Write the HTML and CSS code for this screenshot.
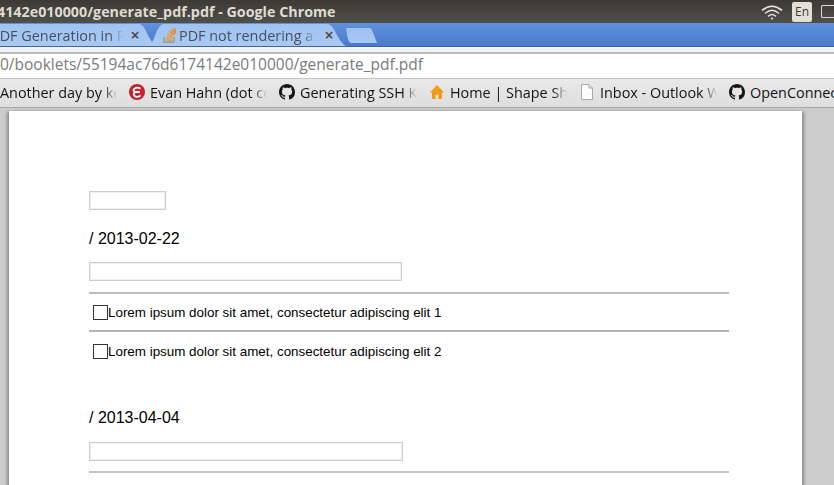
FILE: index.html
```html
<!DOCTYPE html>
<html lang="en">
<head>
<meta charset="utf-8">
<title>generate_pdf.pdf - Google Chrome</title>
<link rel="stylesheet" href="styles.css">
</head>
<body>
<div class="window">
  <header class="titlebar">
    <div class="title">4142e010000/generate_pdf.pdf - Google Chrome</div>
    <div class="tray">
      <svg class="wifi" width="22" height="16" viewBox="0 0 22 16" fill="none" stroke="#e6e3dc" stroke-width="1.6" stroke-linecap="round">
        <path d="M1.5 6 Q11 -1.5 20.5 6"/>
        <path d="M4.5 9 Q11 3.5 17.5 9"/>
        <path d="M7.5 12 Q11 9 14.5 12"/>
        <circle cx="11" cy="14.5" r="1.1" fill="#e6e3dc" stroke="none"/>
      </svg>
      <span class="lang">En</span>
      <span class="batt"></span>
    </div>
  </header>

  <nav class="tabstrip">
    <div class="tab tab-first">
      <span class="tab-label">PDF Generation in Rails</span>
      <span class="tab-close">×</span>
    </div>
    <div class="tab tab-second">
      <svg class="favicon" width="16" height="16" viewBox="0 0 16 16" fill="none">
        <path d="M2 10v5h10v-5" stroke="#a8936f" stroke-width="1.4"/>
        <path d="M4 13h6" stroke="#bca682" stroke-width="1.6"/>
        <path d="M4.2 10.8l6 .5M4.6 8.6l6 1.4M5.6 6.3l5.4 2.9" stroke="#e8a04a" stroke-width="1.5"/>
        <path d="M7.4 4l4.5 4M9.8 2l3.2 5M12.6 .8l1.1 5.7" stroke="#ee8a2a" stroke-width="1.5"/>
      </svg>
      <span class="tab-label">PDF not rendering as expected</span>
      <span class="tab-close">×</span>
    </div>
    <div class="newtab"></div>
  </nav>

  <div class="addressbar">
    <div class="url">0/booklets/55194ac76d6174142e010000/generate_pdf.pdf</div>
  </div>

  <div class="bookmarks">
    <div class="bm bm-first"><span class="bm-label">Another day by kevin</span></div>
    <div class="bm">
      <svg class="bm-icon" width="16" height="16" viewBox="0 0 16 16">
        <circle cx="8" cy="8" r="8" fill="#c4222c"/>
        <path d="M11.5 4.6Q8 2.6 5.6 4.6T6 8Q3.6 10 5.6 12T11.6 11.4M6.4 8H11" fill="none" stroke="#fff" stroke-width="1.8"/>
      </svg>
      <span class="bm-label">Evan Hahn (dot com)</span>
    </div>
    <div class="bm">
      <svg class="bm-icon" width="16" height="16" viewBox="0 0 16 16">
        <path fill="#161614" d="M8 0C3.58 0 0 3.58 0 8c0 3.54 2.29 6.53 5.47 7.59.4.07.55-.17.55-.38 0-.19-.01-.82-.01-1.49-2.01.37-2.53-.49-2.69-.94-.09-.23-.48-.94-.82-1.13-.28-.15-.68-.52-.01-.53.63-.01 1.08.58 1.23.82.72 1.21 1.87.87 2.33.66.07-.52.28-.87.51-1.07-1.78-.2-3.64-.89-3.64-3.95 0-.87.31-1.59.82-2.15-.08-.2-.36-1.02.08-2.12 0 0 .67-.21 2.2.82.64-.18 1.32-.27 2-.27s1.36.09 2 .27c1.53-1.04 2.2-.82 2.2-.82.44 1.1.16 1.92.08 2.12.51.56.82 1.27.82 2.15 0 3.07-1.87 3.75-3.65 3.95.29.25.54.73.54 1.48 0 1.07-.01 1.93-.01 2.2 0 .21.15.46.55.38A8.01 8.01 0 0 0 16 8c0-4.42-3.58-8-8-8z"/>
      </svg>
      <span class="bm-label">Generating SSH Keys</span>
    </div>
    <div class="bm">
      <svg class="bm-icon" width="16" height="16" viewBox="0 0 16 16">
        <path fill="#f59a14" d="M8 1L.8 8.4H3V15h3.6v-4.2h2.8V15H13V8.4h2.2z"/>
      </svg>
      <span class="bm-label">Home | Shape Shed</span>
    </div>
    <div class="bm">
      <svg class="bm-icon" width="16" height="16" viewBox="0 0 16 16">
        <path d="M2.5 .5H10L13.5 4v11.5h-11z" fill="#fbfbfa" stroke="#a9a9a6"/>
        <path d="M10 .5V4h3.5" fill="#e2e2df" stroke="#a9a9a6"/>
      </svg>
      <span class="bm-label">Inbox - Outlook Web</span>
    </div>
    <div class="bm">
      <svg class="bm-icon" width="16" height="16" viewBox="0 0 16 16">
        <path fill="#161614" d="M8 0C3.58 0 0 3.58 0 8c0 3.54 2.29 6.53 5.47 7.59.4.07.55-.17.55-.38 0-.19-.01-.82-.01-1.49-2.01.37-2.53-.49-2.69-.94-.09-.23-.48-.94-.82-1.13-.28-.15-.68-.52-.01-.53.63-.01 1.08.58 1.23.82.72 1.21 1.87.87 2.33.66.07-.52.28-.87.51-1.07-1.78-.2-3.64-.89-3.64-3.95 0-.87.31-1.59.82-2.15-.08-.2-.36-1.02.08-2.12 0 0 .67-.21 2.2.82.64-.18 1.32-.27 2-.27s1.36.09 2 .27c1.53-1.04 2.2-.82 2.2-.82.44 1.1.16 1.92.08 2.12.51.56.82 1.27.82 2.15 0 3.07-1.87 3.75-3.65 3.95.29.25.54.73.54 1.48 0 1.07-.01 1.93-.01 2.2 0 .21.15.46.55.38A8.01 8.01 0 0 0 16 8c0-4.42-3.58-8-8-8z"/>
      </svg>
      <span class="bm-label bm-open">OpenConnect</span>
    </div>
  </div>

  <main class="viewer">
    <article class="sheet">
      <div class="field field-short"></div>
      <h2 class="date">/ 2013-02-22</h2>
      <div class="field field-long"></div>
      <ul class="checks">
        <li class="check"><span class="box"></span><span class="check-text">Lorem ipsum dolor sit amet, consectetur adipiscing elit 1</span></li>
        <li class="check"><span class="box"></span><span class="check-text">Lorem ipsum dolor sit amet, consectetur adipiscing elit 2</span></li>
      </ul>
      <h2 class="date date-second">/ 2013-04-04</h2>
      <div class="field field-long2"></div>
      <div class="rule"></div>
    </article>
  </main>
</div>
</body>
</html>
```
FILE: styles.css
```css
* { box-sizing: border-box; }
html, body { margin: 0; padding: 0; height: 100%; overflow: hidden; }
body { background: #ccc; }

.window {
  width: 834px;
  height: 485px;
  display: flex;
  flex-direction: column;
  overflow: hidden;
  font-family: "Open Sans", "Noto Sans", sans-serif;
}

.titlebar {
  flex: 0 0 23px;
  display: flex;
  align-items: center;
  justify-content: space-between;
  background: linear-gradient(#3b3a36, #514f48);
  overflow: hidden;
}
.title {
  margin-left: -3px;
  font-size: 14.3px;
  font-weight: 700;
  color: #dfdbd2;
  white-space: nowrap;
}
.tray { display: flex; align-items: center; gap: 9px; margin-right: -3px; }
.wifi { display: block; }
.lang {
  width: 20px;
  height: 20px;
  border-radius: 2px;
  background: #e4e0d8;
  color: #3c3b37;
  font-size: 12px;
  line-height: 20px;
  text-align: center;
}
.batt {
  width: 16px;
  height: 13px;
  border: 1px solid #dfdbd2;
  border-radius: 2px 0 0 2px;
  border-right: 0;
}

.tabstrip {
  flex: 0 0 24px;
  display: flex;
  align-items: flex-end;
  background: linear-gradient(#5f91dc, #4a7aca);
  border-bottom: 1px solid #3a65ab;
}
.tab {
  height: 22px;
  display: flex;
  align-items: center;
  background: linear-gradient(#a0c3f0, #a9c9f4);
  flex: none;
}
.tab-first {
  width: 165px;
  margin-left: -9px;
  clip-path: path("M0 22 V0 H148 C155 0 156 15 165 22 Z");
}
.tab-second {
  width: 198px;
  margin-left: -8px;
  padding-left: 14px;
  clip-path: path("M0 22 C7 20 8 0 16 0 H179 C187 0 189 17 198 22 Z");
}
.favicon { flex: none; margin-right: 1px; }
.tab-label {
  font-size: 14.4px;
  color: #45505e;
  white-space: nowrap;
  overflow: hidden;
  -webkit-mask-image: linear-gradient(to right, #000 90%, transparent);
  mask-image: linear-gradient(to right, #000 90%, transparent);
}
.tab-first .tab-label { width: 132px; }
.tab-second .tab-label { width: 137px; }
.tab-close {
  flex: none;
  width: 14px;
  margin-left: 6px;
  text-align: center;
  font-size: 16px;
  font-weight: 600;
  line-height: 16px;
  color: #444;
}
.tab-first .tab-close { margin-left: 5px; }
.newtab {
  width: 31px;
  height: 15px;
  margin: 0 0 3px 0;
  background: linear-gradient(#9dc0ee, #a9c9f4);
  clip-path: path("M0 0 H23 C26 0 27 4 31 15 H5 C2 15 1 6 0 0 Z");
  flex: none;
}

.addressbar {
  flex: 0 0 32px;
  background: #f3f3f3;
  padding-top: 5px;
  overflow: hidden;
}
.url {
  height: 27px;
  background: #fff;
  border-top: 2px solid #b9b9b7;
  border-bottom: 1px solid #c6c6c4;
  font-size: 15.5px;
  line-height: 20px;
  color: #7b7b7b;
  white-space: nowrap;
}

.bookmarks {
  flex: 0 0 29px;
  display: flex;
  align-items: center;
  background: linear-gradient(#e9e9e9, #dedede);
  border-bottom: 1px solid #a8a8a8;
  overflow: hidden;
  padding-bottom: 2px;
}
.bm {
  flex: 0 0 150px;
  display: flex;
  align-items: center;
  gap: 5px;
}
.bm-first { flex-basis: 129px; }
.bm-icon { flex: none; display: block; }
.bm-label {
  width: 117px;
  font-size: 14.4px;
  color: #141414;
  white-space: nowrap;
  overflow: hidden;
  -webkit-mask-image: linear-gradient(to right, #000 88%, transparent);
  mask-image: linear-gradient(to right, #000 88%, transparent);
}
.bm-open { -webkit-mask-image: none; mask-image: none; overflow: visible; }

.viewer {
  flex: 1;
  min-height: 0;
  background: #ccc;
  padding: 3px 0 0 9px;
  overflow: hidden;
}
.sheet {
  width: 793px;
  height: 400px;
  background: #fff;
  padding: 80px 73px 0 80px;
  box-shadow: 3px 0 3px -1px #8a8a8a, -3px 0 3px -1px #8a8a8a;
  font-family: "Liberation Sans", Arial, sans-serif;
  color: #000;
}
.field {
  height: 19px;
  border: 1px solid #cdcdcd;
  box-shadow: inset 0 0 0 1px #efefef;
  background: #fff;
}
.field-short { width: 77px; }
.field-long { width: 313px; }
.field-long2 { width: 314px; }
.date {
  margin: 19px 0 14px;
  font-size: 16px;
  font-weight: 400;
  line-height: 19px;
}
.date-second { margin: 0 0 15px; }
.checks {
  list-style: none;
  margin: 11px 0 0;
  padding: 0;
}
.check {
  height: 38px;
  padding: 0 0 0 4px;
  display: flex;
  align-items: center;
  border-top: 2px solid #bdbdbd;
  font-size: 13.4px;
}
.check-text { margin-top: 1px; }
.check + .check { border-top-color: #b4b4b4; }
.check:last-child { height: 78px; align-items: flex-start; padding-top: 12px; }
.check:last-child .check-text { margin-top: 0; }
.box {
  flex: none;
  width: 15px;
  height: 15px;
  border: 1px solid #333;
}
.rule {
  height: 2px;
  margin-top: 10px;
  background: #c4c4c4;
}
```
